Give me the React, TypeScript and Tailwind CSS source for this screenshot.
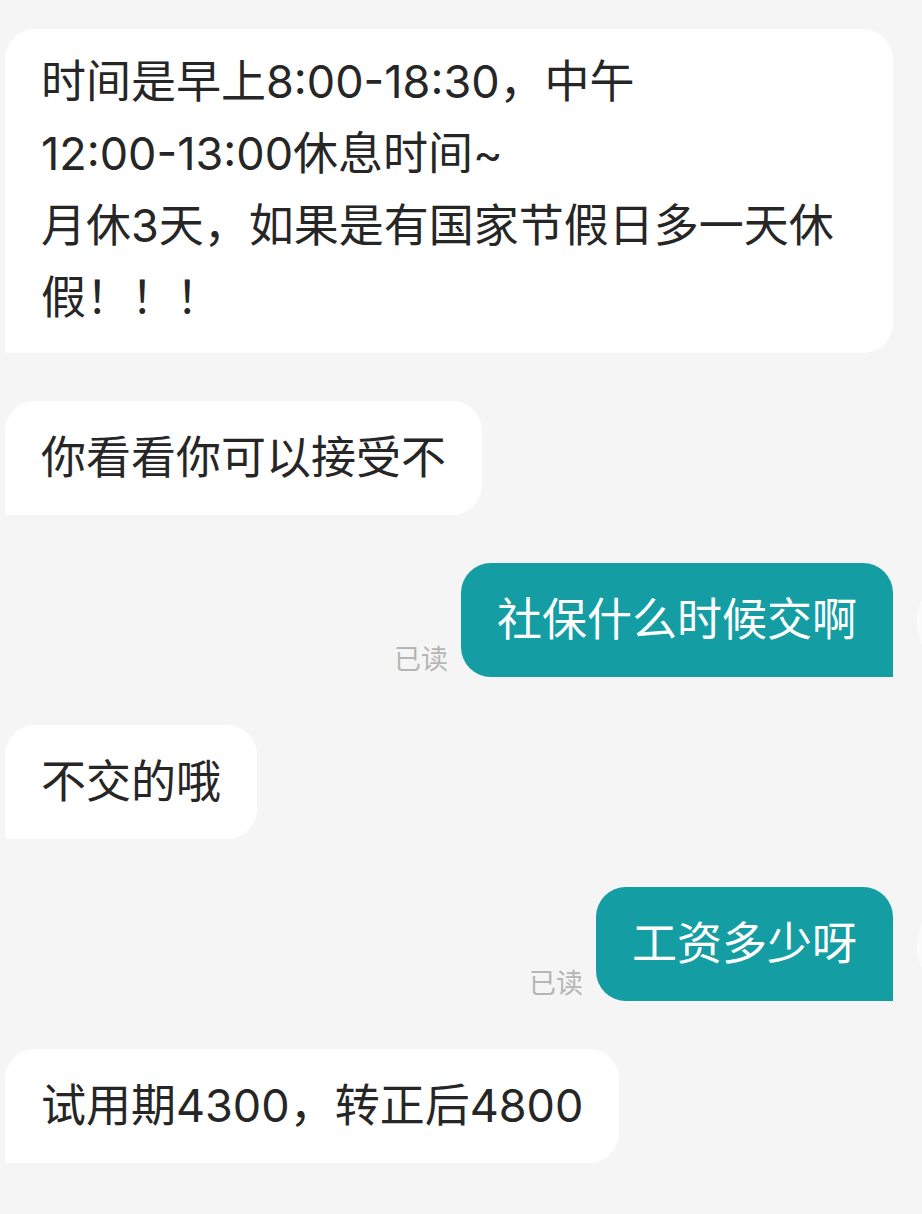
import React from "react";

const font = { fontFamily: "Inter, 'Noto Sans CJK SC', sans-serif" };

function Incoming({ children, first }: { children: React.ReactNode; first?: boolean }) {
  return (
    <div className="flex justify-start">
      <div
        className={
          "ml-[5px] bg-white text-[#262626] text-[45px] leading-[72px] px-[36px] rounded-[30px] rounded-bl-none " +
          (first ? "w-[888px] pt-[17px] pb-[19px]" : "py-[21px]")
        }
      >
        {children}
      </div>
    </div>
  );
}

function Outgoing({ children }: { children: React.ReactNode }) {
  return (
    <div className="flex justify-end items-start">
      <div className="flex items-end">
        <span className="text-[27px] leading-[35px] text-[#b5b5b5] mr-[13px]">已读</span>
        <div className="bg-[#149ea3] text-white text-[45px] leading-[72px] px-[36px] py-[21px] rounded-[30px] rounded-br-none whitespace-nowrap">
          {children}
        </div>
      </div>
      <div className="shrink-0 w-[110px] h-[110px] rounded-full bg-[#fbfbfb] ml-[24px] mr-[-105px] mt-[4px]" />
    </div>
  );
}

export default function App() {
  return (
    <div className="w-full min-h-[1214px] bg-[#f5f5f5] overflow-hidden" style={font}>
      <div className="flex flex-col gap-[48px] pt-[29px]">
        <Incoming first>
          时间是早上8:00-18:30，中午
          <br />
          12:00-13:00休息时间~
          <br />
          月休3天，如果是有国家节假日多一天休
          <br />
          假！！！
        </Incoming>
        <Incoming>你看看你可以接受不</Incoming>
        <Outgoing>社保什么时候交啊</Outgoing>
        <Incoming>不交的哦</Incoming>
        <Outgoing>工资多少呀</Outgoing>
        <Incoming>试用期4300，转正后4800</Incoming>
      </div>
    </div>
  );
}
